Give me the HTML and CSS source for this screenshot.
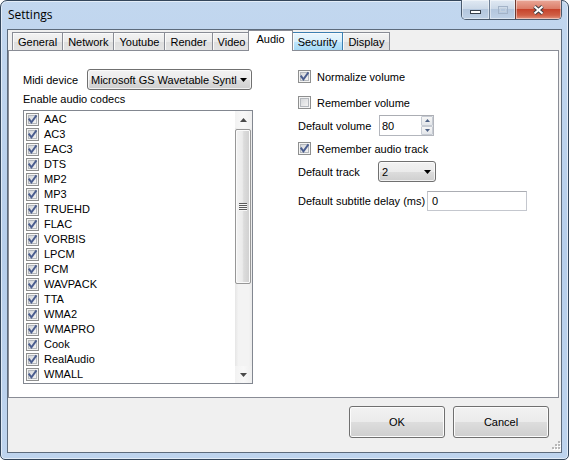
FILE: index.html
```html
<!DOCTYPE html>
<html lang="en">
<head>
<meta charset="utf-8">
<title>Settings</title>
<link rel="stylesheet" href="styles.css">
</head>
<body>
<svg class="defs" width="0" height="0" aria-hidden="true">
  <defs>
    <symbol id="tick" viewBox="0 0 13 13">
      <path d="M3.3 6.4 L5.4 9.3 L9.9 3.1" fill="none" stroke="#4a5d8f" stroke-width="1.9" stroke-linecap="square"/>
    </symbol>
    <symbol id="down" viewBox="0 0 7 4"><path d="M0 0H7L3.5 4Z"/></symbol>
    <symbol id="up" viewBox="0 0 7 4"><path d="M0 4H7L3.5 0Z"/></symbol>
  </defs>
</svg>
<div class="window">
  <div class="titlebar">
    <div class="title">Settings</div>
    <div class="caption-btns">
      <div class="cbtn min">
        <svg width="11" height="4" viewBox="0 0 11 4"><rect x="0.5" y="0.5" width="10" height="3" fill="#fff" stroke="#38414c"/></svg>
      </div>
      <div class="cbtn max">
        <svg width="10" height="8" viewBox="0 0 10 8"><rect x="0.5" y="0.5" width="9" height="7" fill="none" stroke="#a3b3c7"/><rect x="2.5" y="2.5" width="5" height="3" fill="none" stroke="#c3d0de"/></svg>
      </div>
      <div class="cbtn close">
        <svg width="13" height="10" viewBox="0 0 13 10"><path d="M2.5 1.5 L10.5 8.5 M10.5 1.5 L2.5 8.5" stroke="#3b3f45" stroke-width="4"/><path d="M2.5 1.5 L10.5 8.5 M10.5 1.5 L2.5 8.5" stroke="#fff" stroke-width="2"/></svg>
      </div>
    </div>
  </div>
  <div class="client">
    <div class="tabctl">
      <div class="tabstrip">
        <div class="tab">General</div>
        <div class="tab">Network</div>
        <div class="tab">Youtube</div>
        <div class="tab">Render</div>
        <div class="tab">Video</div>
        <div class="tab active">Audio</div>
        <div class="tab hot">Security</div>
        <div class="tab">Display</div>
      </div>
      <div class="panel">
        <div class="col-left">
          <div class="midi">
            <span class="midi-lbl">Midi device</span>
            <div class="combo midi-combo"><span class="combo-text">Microsoft GS Wavetable Syntl</span><svg class="arrow"><use href="#down"/></svg></div>
          </div>
          <div class="codecs-lbl">Enable audio codecs</div>
          <div class="listbox">
            <div class="items">
              <div class="item"><span class="cb"><svg class="tick"><use href="#tick"/></svg></span><span class="item-text">AAC</span></div>
              <div class="item"><span class="cb"><svg class="tick"><use href="#tick"/></svg></span><span class="item-text">AC3</span></div>
              <div class="item"><span class="cb"><svg class="tick"><use href="#tick"/></svg></span><span class="item-text">EAC3</span></div>
              <div class="item"><span class="cb"><svg class="tick"><use href="#tick"/></svg></span><span class="item-text">DTS</span></div>
              <div class="item"><span class="cb"><svg class="tick"><use href="#tick"/></svg></span><span class="item-text">MP2</span></div>
              <div class="item"><span class="cb"><svg class="tick"><use href="#tick"/></svg></span><span class="item-text">MP3</span></div>
              <div class="item"><span class="cb"><svg class="tick"><use href="#tick"/></svg></span><span class="item-text">TRUEHD</span></div>
              <div class="item"><span class="cb"><svg class="tick"><use href="#tick"/></svg></span><span class="item-text">FLAC</span></div>
              <div class="item"><span class="cb"><svg class="tick"><use href="#tick"/></svg></span><span class="item-text">VORBIS</span></div>
              <div class="item"><span class="cb"><svg class="tick"><use href="#tick"/></svg></span><span class="item-text">LPCM</span></div>
              <div class="item"><span class="cb"><svg class="tick"><use href="#tick"/></svg></span><span class="item-text">PCM</span></div>
              <div class="item"><span class="cb"><svg class="tick"><use href="#tick"/></svg></span><span class="item-text">WAVPACK</span></div>
              <div class="item"><span class="cb"><svg class="tick"><use href="#tick"/></svg></span><span class="item-text">TTA</span></div>
              <div class="item"><span class="cb"><svg class="tick"><use href="#tick"/></svg></span><span class="item-text">WMA2</span></div>
              <div class="item"><span class="cb"><svg class="tick"><use href="#tick"/></svg></span><span class="item-text">WMAPRO</span></div>
              <div class="item"><span class="cb"><svg class="tick"><use href="#tick"/></svg></span><span class="item-text">Cook</span></div>
              <div class="item"><span class="cb"><svg class="tick"><use href="#tick"/></svg></span><span class="item-text">RealAudio</span></div>
              <div class="item"><span class="cb"><svg class="tick"><use href="#tick"/></svg></span><span class="item-text">WMALL</span></div>
            </div>
            <div class="vscroll">
              <div class="sb-btn"><svg class="sb-arrow"><use href="#up"/></svg></div>
              <div class="sb-track">
                <div class="thumb">
                  <svg class="thumb-grip" width="8" height="8" viewBox="0 0 8 8">
                    <path d="M0 0.5H8M0 2.5H8M0 4.5H8M0 6.5H8" stroke="#5a5a5a" stroke-width="1"/>
                    <path d="M0 1.5H8M0 3.5H8M0 5.5H8M0 7.5H8" stroke="#f6f6f6" stroke-width="1"/>
                  </svg>
                </div>
              </div>
              <div class="sb-btn"><svg class="sb-arrow"><use href="#down"/></svg></div>
            </div>
          </div>
        </div>
        <div class="col-right">
          <div class="chk-row r1"><span class="cb"><svg class="tick"><use href="#tick"/></svg></span>Normalize volume</div>
          <div class="chk-row r2"><span class="cb"></span>Remember volume</div>
          <div class="field r3">
            <span class="lbl vol-lbl">Default volume</span>
            <div class="numeric"><span class="num-text">80</span>
              <div class="spin">
                <div class="spin-btn"><svg class="spin-arrow"><use href="#up"/></svg></div>
                <div class="spin-btn"><svg class="spin-arrow"><use href="#down"/></svg></div>
              </div>
            </div>
          </div>
          <div class="chk-row r4"><span class="cb"><svg class="tick"><use href="#tick"/></svg></span>Remember audio track</div>
          <div class="field r5">
            <span class="lbl track-lbl">Default track</span>
            <div class="combo track-combo"><span class="combo-text">2</span><svg class="arrow"><use href="#down"/></svg></div>
          </div>
          <div class="field r6">
            <span class="lbl sub-lbl">Default subtitle delay (ms)</span>
            <div class="textbox">0</div>
          </div>
        </div>
      </div>
    </div>
    <div class="footer">
      <button class="btn" type="button">OK</button>
      <button class="btn" type="button">Cancel</button>
      <svg class="grip" width="12" height="12" viewBox="0 0 12 12">
        <g fill="#fff"><rect x="10" y="2" width="2" height="2"/><rect x="7" y="5" width="2" height="2"/><rect x="10" y="5" width="2" height="2"/><rect x="4" y="8" width="2" height="2"/><rect x="7" y="8" width="2" height="2"/><rect x="10" y="8" width="2" height="2"/></g>
        <g fill="#b8b8b8"><rect x="9" y="1" width="2" height="2"/><rect x="6" y="4" width="2" height="2"/><rect x="9" y="4" width="2" height="2"/><rect x="3" y="7" width="2" height="2"/><rect x="6" y="7" width="2" height="2"/><rect x="9" y="7" width="2" height="2"/></g>
      </svg>
    </div>
  </div>
</div>
</body>
</html>
```

FILE: styles.css
```css
* { box-sizing: border-box; }
html, body { margin: 0; padding: 0; background: #ffffff; }
body {
  font-family: "Liberation Sans", Arial, sans-serif;
  font-size: 11px;
  color: #000;
}
.defs { position: absolute; width: 0; height: 0; overflow: hidden; }

.window {
  width: 569px;
  height: 460px;
  border: 1px solid #34465b;
  border-radius: 7px 7px 5px 5px;
  background: linear-gradient(#c2d7ef, #b6ceeb 55%, #bed4ee);
  box-shadow: inset 0 0 0 1px rgba(255, 255, 255, 0.55);
  padding: 0 6px 6px;
  display: flex;
  flex-direction: column;
}

.titlebar {
  height: 28px;
  display: flex;
  align-items: flex-start;
}
.title {
  font-family: "Open Sans", "Noto Sans", sans-serif;
  font-size: 12px;
  line-height: 16px;
  padding: 6px 0 0 1px;
  color: #000;
}
.caption-btns {
  margin-left: auto;
  margin-top: -1px;
  height: 20px;
  display: flex;
  border: 1px solid #4a5a6d;
  border-top: none;
  border-radius: 0 0 5px 5px;
  overflow: hidden;
}
.cbtn {
  display: flex;
  align-items: center;
  justify-content: center;
  padding-top: 1px;
  background: linear-gradient(#e0e9f3, #ccd9e8 45%, #b3c6dd 50%, #bfd1e6 100%);
  box-shadow: inset 0 0 0 1px rgba(255, 255, 255, 0.45);
}
.cbtn.min { width: 27px; padding-top: 4px; }
.cbtn.max { width: 26px; border-left: 1px solid #6e8096; }
.cbtn.close {
  width: 46px;
  border-left: 1px solid #6e3a30;
  background: linear-gradient(#eaa898, #dc7e69 45%, #c7442c 50%, #d05f45 80%, #e3937e 100%);
}

.client {
  flex: 1;
  border: 1px solid #5d6b7c;
  background: #f0f0f0;
  display: flex;
  flex-direction: column;
}

.tabctl {
  height: 368px;
  margin-right: 2px;
  display: flex;
  flex-direction: column;
}
.tabstrip {
  height: 20px;
  display: flex;
  align-items: flex-end;
  padding-left: 4px;
}
.tab {
  height: 18px;
  padding: 0 5px;
  border: 1px solid #898c95;
  border-bottom: none;
  margin-right: -1px;
  display: flex;
  align-items: center;
  white-space: nowrap;
  background: linear-gradient(#f3f3f3, #ebebeb 50%, #dedede 51%, #e3e3e3);
  box-shadow: inset 1px 1px 0 #fbfbfb;
}
.tab.active {
  height: 21px;
  margin: 0 -1px -1px -2px;
  padding: 2px 7px 0;
  align-items: flex-start;
  background: #fff;
  box-shadow: none;
  position: relative;
  z-index: 1;
}
.tab.hot {
  border-color: #3c7fb1;
  background: linear-gradient(#eaf6fd, #d9f0fc 50%, #bee6fd 51%, #a7d9f5);
  position: relative;
}

.panel {
  flex: 1;
  border: 1px solid #898c95;
  background: #fff;
  display: grid;
  grid-template-columns: 230px 1fr;
  column-gap: 45px;
  align-items: start;
  padding: 18px 0 0 14px;
}

.col-left { display: flex; flex-direction: column; }
.midi { display: flex; align-items: center; height: 21px; }
.midi-lbl { width: 64px; }
.combo {
  height: 21px;
  display: flex;
  align-items: center;
  border: 1px solid #707070;
  border-radius: 3px;
  padding-left: 3px;
  background: linear-gradient(#f2f2f2, #ebebeb 50%, #dddddd 51%, #cfcfcf);
  box-shadow: inset 0 0 0 1px rgba(255, 255, 255, 0.7);
}
.midi-combo { width: 165px; }
.combo-text { flex: 1; white-space: nowrap; overflow: hidden; }
.arrow { width: 7px; height: 4px; margin: 0 4px 0 3px; fill: #000; flex: none; }

.codecs-lbl { height: 20px; line-height: 19px; }

.listbox {
  height: 274px;
  border: 1px solid #828790;
  background: #fff;
  display: flex;
}
.items { flex: 1; padding: 1px 0 0 2px; }
.item { height: 15px; display: flex; align-items: center; gap: 5px; white-space: nowrap; }
.item-text { padding-bottom: 2px; }

.cb {
  width: 13px;
  height: 13px;
  flex: none;
  border: 1px solid #8e8f8f;
  background: linear-gradient(135deg, #cdd0d4, #eeeeee 70%, #f7f7f7);
  box-shadow: inset 0 0 0 1px #f4f4f4, inset 0 0 0 2px #b4b8bd;
  position: relative;
}
.tick { position: absolute; left: -1px; top: -1px; width: 13px; height: 13px; }

.vscroll { width: 17px; display: flex; flex-direction: column; }
.sb-btn {
  height: 17px;
  display: flex;
  align-items: center;
  justify-content: center;
  background: linear-gradient(to right, #f2f2f2, #f8f8f8 50%, #efefef);
}
.sb-arrow { width: 7px; height: 4px; fill: #4a4a4a; }
.sb-track {
  flex: 1;
  background: linear-gradient(to right, #e6e6e6, #f3f3f3 20%, #f3f3f3 80%, #ebebeb);
}
.thumb {
  height: 155px;
  margin: 1px 1px 0 0;
  border: 1px solid #979797;
  border-radius: 2px;
  background: linear-gradient(to right, #f3f3f3, #ebebeb 45%, #dcdcdc 55%, #cfcfcf);
  box-shadow: inset 0 0 0 1px #fafafa;
  display: flex;
  align-items: center;
  justify-content: center;
}

.col-right { display: flex; flex-direction: column; }
.chk-row { height: 13px; display: flex; align-items: center; gap: 6px; white-space: nowrap; }
.field { display: flex; align-items: center; white-space: nowrap; }
.r1 { margin-top: 1px; }
.r2 { margin-top: 13px; }
.r3 { margin-top: 6px; height: 21px; }
.r4 { margin-top: 6px; }
.r5 { margin-top: 6px; height: 21px; }
.r6 { margin-top: 9px; height: 20px; }
.vol-lbl { width: 81px; }
.track-lbl { width: 80px; }
.sub-lbl { width: 129px; }

.numeric {
  width: 55px;
  height: 21px;
  border: 1px solid #b3b6bd;
  border-top-color: #abadb3;
  display: flex;
  align-items: center;
  padding-left: 2px;
  background: #fff;
}
.num-text { flex: 1; }
.spin { width: 12px; height: 19px; display: flex; flex-direction: column; }
.spin-btn {
  flex: 1;
  display: flex;
  align-items: center;
  justify-content: center;
  border: 1px solid #c6cbd3;
  border-radius: 1px;
  background: linear-gradient(#f6f6f6, #e3e6ea);
}
.spin-arrow { width: 5px; height: 3px; fill: #4d6185; }

.track-combo { width: 58px; }

.textbox {
  width: 100px;
  height: 20px;
  border: 1px solid #c4c7ce;
  border-top-color: #abadb3;
  background: #fff;
  display: flex;
  align-items: center;
  padding-left: 4px;
}

.footer {
  flex: 1;
  display: flex;
  justify-content: flex-end;
  align-items: flex-start;
  gap: 8px;
  padding: 8px 12px 0 0;
  position: relative;
}
.btn {
  width: 96px;
  height: 32px;
  padding: 0;
  border: 1px solid #707070;
  border-radius: 3px;
  background: linear-gradient(#f2f2f2, #ebebeb 50%, #dddddd 51%, #cfcfcf);
  box-shadow: inset 0 0 0 1px #fcfcfc;
  font-family: "Liberation Sans", Arial, sans-serif;
  font-size: 11px;
  color: #000;
}
.grip { position: absolute; right: 0; bottom: 0; }
```
